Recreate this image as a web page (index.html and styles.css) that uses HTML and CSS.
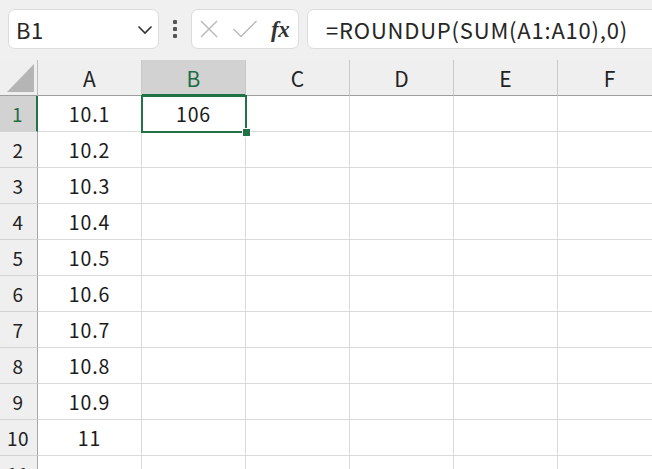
FILE: index.html
```html
<!DOCTYPE html>
<html lang="ja">
<head>
<meta charset="utf-8">
<link rel="stylesheet" href="styles.css">
</head>
<body>
<div class="app">
  <div class="toolbar">
    <div class="namebox">
      <span class="name">B1</span>
      <svg class="chev" width="16" height="10" viewBox="0 0 16 10"><path d="M1.5 1.5 L8 8 L14.5 1.5" fill="none" stroke="#333" stroke-width="1.6"/></svg>
    </div>
    <div class="dots"><i></i><i></i><i></i></div>
    <div class="fbtns">
      <svg width="20" height="20" viewBox="0 0 20 20"><path d="M2 2 L18 18 M18 2 L2 18" stroke="#b8b8b8" stroke-width="1.4" fill="none"/></svg>
      <svg width="26" height="20" viewBox="0 0 26 20"><path d="M1.5 10 L9 17.5 L24.5 2" stroke="#b8b8b8" stroke-width="1.4" fill="none"/></svg>
      <span class="fx">fx</span>
    </div>
    <div class="formula">=ROUNDUP(SUM(A1:A10),0)</div>
  </div>
  <div class="sheet">
    <div class="grid">
      <div class="corner"><svg width="38" height="36" viewBox="0 0 38 36"><path d="M7 32 L34 32 L34 4 Z" fill="#b5b5b5"/></svg></div>
      <div class="ch">A</div>
      <div class="ch sel">B</div>
      <div class="ch">C</div>
      <div class="ch">D</div>
      <div class="ch">E</div>
      <div class="ch">F</div>

      <div class="rh sel">1</div><div class="c">10.1</div><div class="c">106</div><div class="c"></div><div class="c"></div><div class="c"></div><div class="c"></div>
      <div class="rh">2</div><div class="c">10.2</div><div class="c"></div><div class="c"></div><div class="c"></div><div class="c"></div><div class="c"></div>
      <div class="rh">3</div><div class="c">10.3</div><div class="c"></div><div class="c"></div><div class="c"></div><div class="c"></div><div class="c"></div>
      <div class="rh">4</div><div class="c">10.4</div><div class="c"></div><div class="c"></div><div class="c"></div><div class="c"></div><div class="c"></div>
      <div class="rh">5</div><div class="c">10.5</div><div class="c"></div><div class="c"></div><div class="c"></div><div class="c"></div><div class="c"></div>
      <div class="rh">6</div><div class="c">10.6</div><div class="c"></div><div class="c"></div><div class="c"></div><div class="c"></div><div class="c"></div>
      <div class="rh">7</div><div class="c">10.7</div><div class="c"></div><div class="c"></div><div class="c"></div><div class="c"></div><div class="c"></div>
      <div class="rh">8</div><div class="c">10.8</div><div class="c"></div><div class="c"></div><div class="c"></div><div class="c"></div><div class="c"></div>
      <div class="rh">9</div><div class="c">10.9</div><div class="c"></div><div class="c"></div><div class="c"></div><div class="c"></div><div class="c"></div>
      <div class="rh">10</div><div class="c">11</div><div class="c"></div><div class="c"></div><div class="c"></div><div class="c"></div><div class="c"></div>
      <div class="rh">11</div><div class="c"></div><div class="c"></div><div class="c"></div><div class="c"></div><div class="c"></div><div class="c"></div>
    </div>
    <div class="selection"><span class="handle"></span></div>
  </div>
</div>
</body>
</html>
```

FILE: styles.css
```css
* { box-sizing: border-box; }
html, body { margin: 0; padding: 0; }
body {
  width: 652px;
  height: 469px;
  overflow: hidden;
  background: #ffffff;
  font-family: "Noto Sans CJK JP", "Noto Sans", sans-serif;
  font-weight: 400;
  color: #222;
}
.app { width: 652px; height: 469px; overflow: hidden; }
.toolbar {
  height: 60px;
  background: #f0f0f0;
  display: flex;
  align-items: flex-start;
  padding-top: 9px;
  padding-left: 8px;
}
.namebox {
  width: 151px;
  height: 40px;
  background: #fff;
  border: 1px solid #dcdcdc;
  border-radius: 7px;
  display: flex;
  align-items: center;
  justify-content: space-between;
  padding: 0 5px 0 7px;
}
.name { font-size: 22px; color: #262626; line-height: 1; letter-spacing: 0.5px; }
.chev { margin-top: 2px; }
.dots {
  width: 32px;
  height: 40px;
  display: flex;
  flex-direction: column;
  align-items: center;
  justify-content: center;
  gap: 3px;
}
.dots i { display: block; width: 4px; height: 4px; background: #555; border-radius: 1px; }
.fbtns {
  width: 108px;
  height: 40px;
  background: #fff;
  border: 1px solid #dcdcdc;
  border-radius: 7px;
  display: flex;
  align-items: center;
  padding-left: 7px;
  gap: 13px;
}
.fx {
  font-family: "Liberation Serif", "DejaVu Serif", serif;
  font-style: italic;
  font-weight: bold;
  font-size: 23px;
  color: #333;
  line-height: 1;
  margin-left: 0;
  letter-spacing: -0.5px;
}
.formula {
  flex: 1;
  height: 40px;
  margin-left: 8px;
  margin-right: -10px;
  background: #fff;
  border: 1px solid #dcdcdc;
  border-radius: 7px;
  padding-left: 18px;
  display: flex;
  align-items: center;
  font-size: 22px;
  letter-spacing: 0.8px;
  color: #262626;
  white-space: nowrap;
}
.sheet { position: relative; }
.grid {
  display: grid;
  grid-template-columns: 38px repeat(6, 104px);
  grid-auto-rows: 36px;
}
.corner, .ch, .rh {
  background: #efefef;
}
.corner {
  border-right: 1px solid #bdbdbd;
  border-bottom: 1px solid #9e9e9e;
}
.corner svg { display: block; }
.ch {
  border-right: 1px solid #c9c9c9;
  border-bottom: 1px solid #9e9e9e;
  display: flex;
  align-items: center;
  justify-content: center;
  font-size: 21px;
  color: #222;
}
.ch.sel {
  background: #d2d2d2;
  color: #1f6d43;
  border-bottom: 2px solid #217346;
  padding-top: 1px;
}
.rh {
  border-right: 1px solid #a8a8a8;
  border-bottom: 1px solid #d4d4d4;
  display: flex;
  align-items: center;
  justify-content: center;
  font-size: 19px;
  letter-spacing: 0.5px;
  color: #222;
  padding-right: 1px;
}
.rh.sel {
  background: #d2d2d2;
  color: #1f6d43;
  border-right: 2px solid #217346;
}
.c {
  border-right: 1px solid #dadada;
  border-bottom: 1px solid #dadada;
  display: flex;
  align-items: center;
  justify-content: center;
  font-size: 19.5px;
  letter-spacing: 0.9px;
  color: #1a1a1a;
}
.selection {
  position: absolute;
  left: 141px;
  top: 35px;
  width: 106px;
  height: 38px;
  border: 2px solid #217346;
  pointer-events: none;
}
.handle {
  position: absolute;
  right: -5px;
  bottom: -5px;
  width: 7px;
  height: 7px;
  background: #217346;
  outline: 1px solid #fff;
}
```
